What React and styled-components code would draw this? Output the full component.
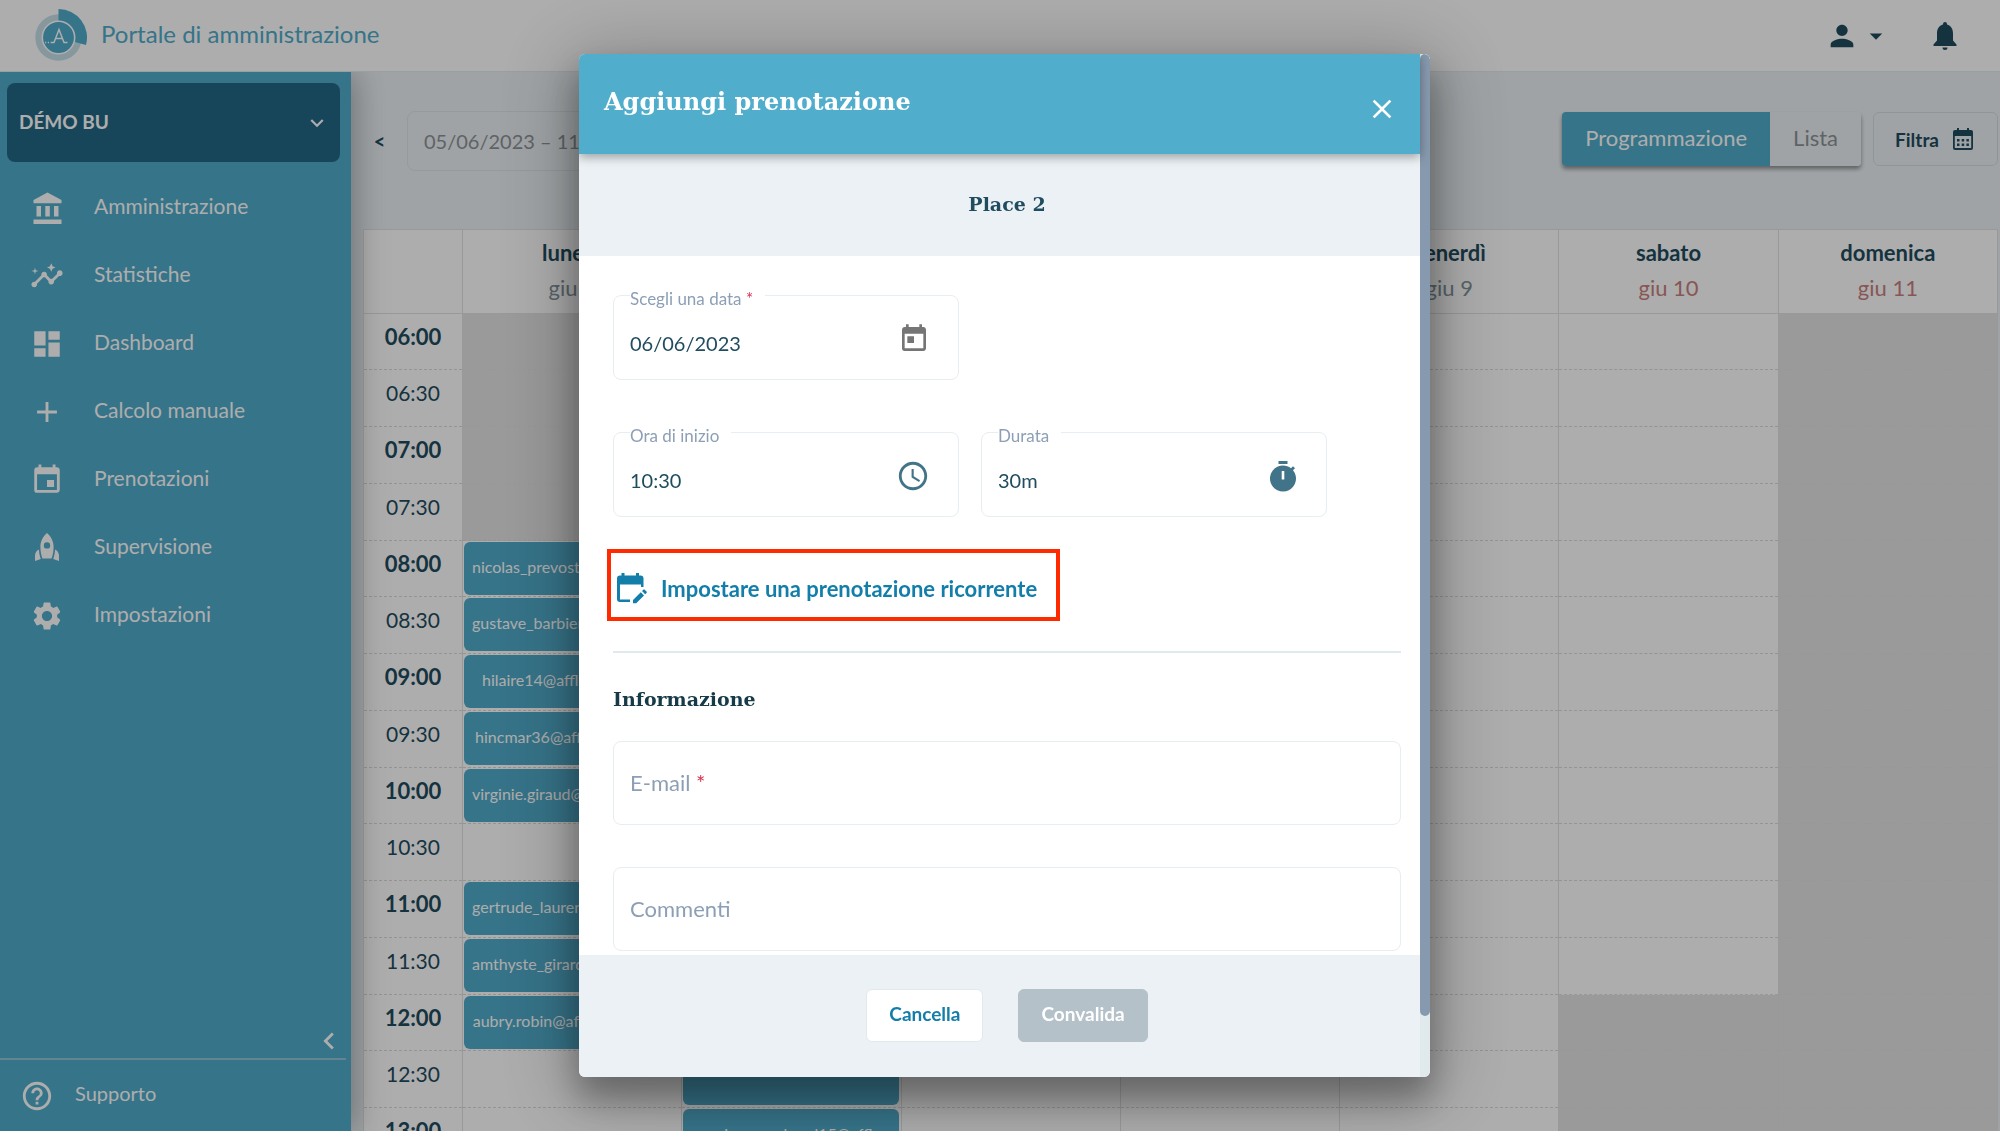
import React from 'react';
import styled, { createGlobalStyle } from 'styled-components';
import {
  MdInsights,
  MdDashboard,
  MdAdd,
  MdEvent,
  MdSettings,
  MdHelpOutline,
  MdKeyboardArrowDown,
  MdKeyboardArrowLeft,
  MdPerson,
  MdArrowDropDown,
  MdClose,
  MdToday,
  MdAccessTime,
} from 'react-icons/md';

const sans = `Lato, "Noto Sans", "Open Sans", sans-serif`;
const slab = `"DejaVu Serif", "Liberation Serif", serif`;

const GlobalStyle = createGlobalStyle`
  * {
    box-sizing: border-box;
  }
  html,
  body {
    margin: 0;
    height: 100%;
    overflow: hidden;
  }
  body {
    font-family: ${sans};
    font-size: 22px;
    color: #1f4c5e;
    background: #ebf1f4;
  }
  button,
  input {
    font: inherit;
    color: inherit;
    margin: 0;
  }
`;

const Page = styled.div`
  display: flex;
  flex-direction: column;
  height: 100vh;
  overflow: hidden;
`;

const TopBar = styled.header`
  position: relative;
  z-index: 2;
  display: flex;
  align-items: center;
  flex-shrink: 0;
  height: 72px;
  padding: 0 43px 0 34px;
  background: #fff;
  border-bottom: 1px solid #e4eaed;
`;

const Brand = styled.h1`
  flex: 1;
  margin: 0 0 0 13px;
  font-size: 24px;
  font-weight: 400;
  line-height: 32px;
  padding-bottom: 4px;
  color: #50abca;
`;

const PlainButton = styled.button`
  display: flex;
  align-items: center;
  padding: 0;
  border: 0;
  background: none;
  cursor: pointer;
`;

const AccountButton = styled(PlainButton)`
  gap: 2px;
  margin-right: 42px;
`;

const Body = styled.div`
  display: flex;
  flex: 1;
  min-height: 0;
`;

const Sidebar = styled.aside`
  display: flex;
  flex-direction: column;
  flex-shrink: 0;
  width: 351px;
  padding-top: 11px;
  color: #fff;
  background: #50abca;
  box-shadow: 2px 0 32px rgba(0, 0, 0, 0.35);
  z-index: 1;
`;

const SiteButton = styled.button`
  display: flex;
  align-items: center;
  justify-content: space-between;
  height: 79px;
  margin: 0 11px 0 7px;
  padding: 0 10px 0 12px;
  border: 0;
  border-radius: 8px;
  font-size: 19px;
  font-weight: 700;
  color: #fff;
  background: #236886;
`;

const SiteName = styled.span`
  padding-bottom: 3px;
`;

const Menu = styled.nav`
  display: flex;
  flex-direction: column;
  flex: 1;
  padding-top: 12px;
`;

const MenuLink = styled.a`
  display: flex;
  align-items: center;
  gap: 30px;
  height: 68px;
  padding-left: 30px;
  font-size: 21px;
  color: #fff;
  text-decoration: none;

  span {
    padding-bottom: 5px;
  }
`;

const CollapseButton = styled(PlainButton)`
  align-self: flex-end;
  margin-right: 5px;
`;

const SupportLink = styled(MenuLink)`
  gap: 21px;
  height: 73px;
  margin-right: 5px;
  padding-left: 20px;
  border-top: 2px solid #94c4d4;
  font-size: 20px;
`;

const Main = styled.main`
  display: flex;
  flex-direction: column;
  flex: 1;
  min-width: 0;
  padding: 39px 2px 0 12px;
  background: #ebf1f4;
`;

const Toolbar = styled.div`
  display: flex;
  align-items: flex-start;
  flex-shrink: 0;
  height: 118px;
`;

const PrevButton = styled(PlainButton)`
  justify-content: center;
  width: 33px;
  height: 60px;
  font-size: 20px;
  font-weight: 700;
`;

const RangeInput = styled.input`
  width: 320px;
  height: 60px;
  margin-left: 11px;
  padding: 0 16px;
  border: 1px solid #dce3e6;
  border-radius: 8px;
  font-size: 20px;
  color: #8d9396;
  background: transparent;
`;

const ViewSwitch = styled.div`
  display: flex;
  margin: 1px 12px 0 auto;
  border-radius: 4px;
  box-shadow: 0 3px 4px rgba(0, 0, 0, 0.4);
`;

const ViewButton = styled.button`
  height: 54px;
  padding: 0 23px 3px;
  border: 0;
  border-radius: ${({ $active }) => ($active ? '4px 0 0 4px' : '0 4px 4px 0')};
  color: ${({ $active }) => ($active ? '#fff' : '#8d9396')};
  background: ${({ $active }) => ($active ? '#50abca' : '#ebf1f4')};
`;

const FilterButton = styled(PlainButton)`
  gap: 14px;
  height: 54px;
  margin-top: 1px;
  padding: 0 24px 0 21px;
  border: 1px solid #d5dde0;
  border-radius: 6px;
  font-size: 19px;
  font-weight: 700;
`;

const Schedule = styled.table`
  width: 100%;
  table-layout: fixed;
  border-collapse: collapse;
  background: #fff;
`;

const Corner = styled.td`
  width: 99px;
  height: 84px;
  border: 1px solid #e2e2e2;
`;

const DayHead = styled.th`
  height: 84px;
  padding: 0 0 4px;
  border: 1px solid #e2e2e2;
  line-height: 35px;
`;

const DayDate = styled.div`
  font-weight: 400;
  color: ${({ $weekend }) => ($weekend ? '#c97f80' : '#83939b')};
`;

const SlotRow = styled.tr`
  height: 57px;

  &:nth-child(4n + 1) {
    height: 56px;
  }
`;

const TimeHead = styled.th`
  padding: 0 0 11px;
  border: solid #e2e2e2;
  border-width: 0 1px;
  border-top: 1px dashed #dadada;
  font-size: ${({ $hour }) => ($hour ? 22 : 21)}px;
  font-weight: ${({ $hour }) => ($hour ? 700 : 400)};
`;

const Slot = styled.td`
  padding: 1px;
  border: solid #e2e2e2;
  border-width: 0 1px;
  border-top: 1px dashed ${({ $closed }) => ($closed ? '#e1e1e1' : '#dadada')};
  vertical-align: top;
  background: ${({ $closed }) => ($closed ? '#e4e4e4' : '#fff')};
`;

const Booking = styled.div`
  height: 53px;
  margin-right: 1px;
  padding: 0 8px;
  border-radius: 6px;
  overflow: hidden;
  text-overflow: ellipsis;
  white-space: nowrap;
  text-align: center;
  font-size: 16px;
  line-height: 50px;
  color: #fff;
  background: #50abca;
`;

const Backdrop = styled.div`
  position: fixed;
  inset: 0;
  z-index: 10;
  display: flex;
  justify-content: center;
  padding: 54px 0;
  background: rgba(0, 0, 0, 0.32);
`;

const Modal = styled.section`
  display: flex;
  width: 851px;
  max-width: 100%;
  margin-left: 9px;
  border-radius: 6px;
  overflow: hidden;
  background: #fff;
  box-shadow: 0 20px 34px 2px rgba(0, 0, 0, 0.3), 0 10px 76px 14px rgba(0, 0, 0, 0.22);
`;

const ModalMain = styled.div`
  display: flex;
  flex-direction: column;
  flex: 1;
`;

const ScrollTrack = styled.div`
  width: 10px;
  background: #e0eaed;
`;

const ScrollThumb = styled.div`
  height: 94%;
  border-radius: 5px;
  background: #8799ae;
`;

const ModalHeader = styled.div`
  display: flex;
  justify-content: space-between;
  flex-shrink: 0;
  height: 100px;
  padding: 31px 22px 0 25px;
  color: #fff;
  background: #50adcb;
  box-shadow: 0 3px 10px rgba(0, 0, 0, 0.35);
  z-index: 1;
`;

const ModalTitle = styled.h2`
  margin: 0;
  font-family: ${slab};
  font-size: 24px;
  line-height: 34px;
`;

const CloseButton = styled(PlainButton)`
  height: 48px;
`;

const Resource = styled.h3`
  flex-shrink: 0;
  height: 102px;
  margin: 0;
  padding: 0 19px 0 34px;
  font-family: ${slab};
  font-size: 19px;
  line-height: 100px;
  text-align: center;
  background: #ebf1f4;
`;

const Form = styled.form`
  display: flex;
  flex-direction: column;
  flex: 1;
  padding: 26px 19px 0 34px;
`;

const FieldRow = styled.div`
  display: grid;
  grid-template-columns: 346px 346px;
  gap: 22px;
  margin-bottom: ${({ $last }) => ($last ? '32px' : '39px')};
`;

const Field = styled.fieldset`
  display: flex;
  align-items: center;
  height: 98px;
  min-width: 0;
  margin: 0;
  padding: 0 28px 1px 16px;
  border: 1px solid #e6eef1;
  border-radius: 8px;

  svg {
    margin-bottom: 8px;
  }
`;

const Legend = styled.legend`
  padding: 7px 12px 0 0;
  font-size: 17px;
  line-height: 19px;
  color: #8c9fb5;
`;

const Required = styled.span`
  color: #dc3350;
`;

const FieldInput = styled.input`
  flex: 1;
  min-width: 0;
  padding: 0;
  border: 0;
  outline: 0;
  font-size: 20px;
  background: transparent;
`;

const RecurringButton = styled.button`
  display: flex;
  align-items: center;
  align-self: flex-start;
  gap: 14px;
  height: 72px;
  margin-left: -6px;
  padding: 6px 19px 0 6px;
  border: 4px solid #ff2a00;
  font-size: 22px;
  font-weight: 700;
  color: #127ea9;
  background: #fff;
`;

const Divider = styled.hr`
  width: 100%;
  height: 2px;
  margin: 30px 0 31px;
  border: 0;
  background: #e0eaed;
`;

const SectionTitle = styled.h3`
  margin: 0 0 27px;
  font-family: ${slab};
  font-size: 19px;
  line-height: 30px;
  color: #163a47;
`;

const WideField = styled.label`
  display: flex;
  align-items: center;
  gap: 5px;
  height: 84px;
  padding: 0 16px 2px;
  border: 1px solid #e6eef1;
  border-radius: 8px;
  color: #8c9fb5;

  & + & {
    margin-top: 42px;
  }
`;

const ModalFooter = styled.div`
  display: flex;
  justify-content: center;
  gap: 35px;
  flex-shrink: 0;
  height: 122px;
  padding: 34px 19px 0 34px;
  background: #ebf1f4;
`;

const FooterButton = styled.button`
  height: 53px;
  padding: 0 22px 4px;
  border: 1px solid ${({ $primary }) => ($primary ? '#b4c1c9' : '#e0eaed')};
  border-radius: 6px;
  font-size: 19px;
  font-weight: 700;
  color: ${({ $primary }) => ($primary ? '#fff' : '#127ea9')};
  background: ${({ $primary }) => ($primary ? '#b4c1c9' : '#fff')};
`;

const Logo = () => (
  <svg width="54" height="71" viewBox="0 0 54 71" aria-hidden="true">
    <circle cx="24.5" cy="37.5" r="23.2" fill="#c6dfe8" />
    <path d="M24.500 9A28.500 28.500 0 0 1 52 45L24.500 37.500Z" fill="#50abca" />
    <circle cx="24.5" cy="37.5" r="16.2" fill="#50abca" stroke="#fff" strokeWidth="1.6" />
    <path
      d="M11 42.500h1.200m1.600 0H15m1.600 0h3.400L25 29.500l5 13h3.500M22 38.500h6"
      fill="none"
      stroke="#fff"
      strokeWidth="1.500"
    />
  </svg>
);

const Bank = () => (
  <svg width="34" height="34" viewBox="0 0 34 34" fill="currentColor" aria-hidden="true">
    <path d="M17.500 1.500 31.500 9v3.200h-28V9ZM6.500 15h4.500v10.500H6.500ZM15.300 15h4.500v10.500h-4.500ZM24 15h4.500v10.500H24ZM3.500 28.500h28V33h-28Z" />
  </svg>
);

const Rocket = () => (
  <svg width="34" height="34" viewBox="0 0 34 34" fill="currentColor" aria-hidden="true">
    <path
      fillRule="evenodd"
      d="M17 2c4.500 3.700 6.600 8.700 6.600 14 0 4-.7 8-2 11.500h-9.200c-1.300-3.500-2-7.500-2-11.500C10.400 10.700 12.500 5.700 17 2Zm0 9.200a3.200 3.200 0 1 0 0 6.400 3.200 3.200 0 0 0 0-6.400Z"
    />
    <path d="M8.900 18.500c.2 3.500.9 6.500 1.900 9.500L5 30v-5.500c0-2.600 1.500-4.800 3.900-6ZM25.100 18.500c-.2 3.500-.9 6.500-1.900 9.500l5.800 2v-5.500c0-2.600-1.500-4.800-3.900-6Z" />
  </svg>
);

const Bell = () => (
  <svg width="24" height="30" viewBox="0 0 24 30" fill="currentColor" aria-hidden="true">
    <path d="M12 1a2 2 0 0 1 2 2v.6c3.900 1 6 4.400 6 8.900v7l3.500 4V25H.5v-1.500l3.500-4v-7c0-4.500 2.100-7.900 6-8.900V3a2 2 0 0 1 2-2ZM9.500 26.500h5a2.500 2.500 0 0 1-5 0Z" />
  </svg>
);

const CalendarGrid = () => (
  <svg width="20" height="24" viewBox="0 0 20 24" fill="currentColor" aria-hidden="true">
    <path
      fillRule="evenodd"
      d="M4 1h2v2h8V1h2v2h2a2 2 0 0 1 2 2v16a2 2 0 0 1-2 2H2a2 2 0 0 1-2-2V5a2 2 0 0 1 2-2h2ZM1.800 9v12h16.400V9ZM4 12h2.500v2.500H4Zm4.700 0h2.500v2.500H8.700Zm4.700 0h2.500v2.500h-2.500ZM4 16.500h2.500V19H4Zm4.700 0h2.500V19H8.700Zm4.700 0h2.500V19h-2.500Z"
    />
  </svg>
);

const CalendarPen = () => (
  <svg width="30" height="32" viewBox="0 0 30 32" fill="currentColor" aria-hidden="true">
    <path
      fillRule="evenodd"
      d="M4.500 1h3v2.500h11.500V1h3v2.500h1.500A3 3 0 0 1 26.500 6.500V15h-2.500v-2.500H3V27.500h10V30H3a3 3 0 0 1-3-3V6.500a3 3 0 0 1 3-3h1.500Z"
    />
    <path d="M16 28l7.800-7.800 3.200 3.200-7.800 7.800H16ZM25 19l1.300-1.300a1 1 0 0 1 1.400 0l1.800 1.800a1 1 0 0 1 0 1.400L28.200 22.200Z" />
  </svg>
);

const Stopwatch = () => (
  <svg width="30" height="32" viewBox="0 0 30 32" fill="#427489" aria-hidden="true">
    <path
      fillRule="evenodd"
      d="M10.500 1h9v3h-9ZM15 5.500c3 0 5.800 1 8 2.700l2-2 2 2-2 2A13 13 0 1 1 15 5.500ZM13.700 11v8.500h2.600V11Z"
    />
  </svg>
);

const menuItems = [
  { label: 'Amministrazione', icon: <Bank /> },
  { label: 'Statistiche', icon: <MdInsights size={34} /> },
  { label: 'Dashboard', icon: <MdDashboard size={34} /> },
  { label: 'Calcolo manuale', icon: <MdAdd size={34} /> },
  { label: 'Prenotazioni', icon: <MdEvent size={34} /> },
  { label: 'Supervisione', icon: <Rocket /> },
  { label: 'Impostazioni', icon: <MdSettings size={34} /> },
];

const days = [
  { name: 'lunedì', date: 'giu 5' },
  { name: 'martedì', date: 'giu 6' },
  { name: 'mercoledì', date: 'giu 7' },
  { name: 'giovedì', date: 'giu 8' },
  { name: 'venerdì', date: 'giu 9' },
  { name: 'sabato', date: 'giu 10', weekend: true },
  { name: 'domenica', date: 'giu 11', weekend: true },
];

const times = [
  '06:00', '06:30', '07:00', '07:30', '08:00', '08:30', '09:00', '09:30',
  '10:00', '10:30', '11:00', '11:30', '12:00', '12:30', '13:00',
];

const bookings = {
  0: {
    '08:00': 'nicolas_prevost@affluences.com',
    '08:30': 'gustave_barbier@affluences.com',
    '09:00': 'hilaire14@affluences.com',
    '09:30': 'hincmar36@affluences.com',
    '10:00': 'virginie.giraud@affluences.com',
    '11:00': 'gertrude_laurent@affluences.com',
    '11:30': 'amthyste_girard@affluences.com',
    '12:00': 'aubry.robin@affluences.com',
  },
  1: {
    '12:30': '',
    '13:00': 'marine.marchand15@affl…',
  },
};

const isClosed = (day, time) =>
  (day === 0 && time < '08:00') || (day === 5 && time >= '12:00') || day === 6;

const App = () => {
  return (
    <Page>
      <GlobalStyle />
      <TopBar>
        <Logo />
        <Brand>Portale di amministrazione</Brand>
        <AccountButton aria-label="Account">
          <MdPerson size={34} />
          <MdArrowDropDown size={30} />
        </AccountButton>
        <PlainButton aria-label="Notifiche">
          <Bell />
        </PlainButton>
      </TopBar>

      <Body>
        <Sidebar>
          <SiteButton>
            <SiteName>DÉMO BU</SiteName>
            <MdKeyboardArrowDown size={26} />
          </SiteButton>
          <Menu>
            {menuItems.map((item) => (
              <MenuLink href="#" key={item.label}>
                {item.icon}
                <span>{item.label}</span>
              </MenuLink>
            ))}
          </Menu>
          <CollapseButton aria-label="Riduci">
            <MdKeyboardArrowLeft size={34} color="#fff" />
          </CollapseButton>
          <SupportLink href="#">
            <MdHelpOutline size={34} />
            <span>Supporto</span>
          </SupportLink>
        </Sidebar>

        <Main>
          <Toolbar>
            <PrevButton aria-label="Settimana precedente">&lt;</PrevButton>
            <RangeInput aria-label="Periodo" defaultValue="05/06/2023 – 11/06/2023" />
            <ViewSwitch>
              <ViewButton $active>Programmazione</ViewButton>
              <ViewButton>Lista</ViewButton>
            </ViewSwitch>
            <FilterButton>
              Filtra
              <CalendarGrid />
            </FilterButton>
          </Toolbar>

          <Schedule>
            <thead>
              <tr>
                <Corner />
                {days.map((day) => (
                  <DayHead key={day.name} scope="col">
                    {day.name}
                    <DayDate $weekend={day.weekend}>{day.date}</DayDate>
                  </DayHead>
                ))}
              </tr>
            </thead>
            <tbody>
              {times.map((time) => (
                <SlotRow key={time}>
                  <TimeHead scope="row" $hour={time.endsWith('00')}>{time}</TimeHead>
                  {days.map((day, i) => (
                    <Slot key={day.name} $closed={isClosed(i, time)}>
                      {bookings[i]?.[time] !== undefined && (
                        <Booking>{bookings[i][time]}</Booking>
                      )}
                    </Slot>
                  ))}
                </SlotRow>
              ))}
            </tbody>
          </Schedule>
        </Main>
      </Body>

      <Backdrop>
        <Modal role="dialog" aria-labelledby="modal-title">
          <ModalMain>
            <ModalHeader>
              <ModalTitle id="modal-title">Aggiungi prenotazione</ModalTitle>
              <CloseButton aria-label="Chiudi">
                <MdClose size={32} color="#fff" />
              </CloseButton>
            </ModalHeader>
            <Resource>Place 2</Resource>
            <Form>
              <FieldRow>
                <Field>
                  <Legend>
                    <label htmlFor="date">Scegli una data <Required>*</Required></label>
                  </Legend>
                  <FieldInput id="date" defaultValue="06/06/2023" />
                  <MdToday size={32} color="#757575" />
                </Field>
              </FieldRow>
              <FieldRow $last>
                <Field>
                  <Legend><label htmlFor="start">Ora di inizio</label></Legend>
                  <FieldInput id="start" defaultValue="10:30" />
                  <MdAccessTime size={34} color="#427489" />
                </Field>
                <Field>
                  <Legend><label htmlFor="duration">Durata</label></Legend>
                  <FieldInput id="duration" defaultValue="30m" />
                  <Stopwatch />
                </Field>
              </FieldRow>
              <RecurringButton type="button">
                <CalendarPen />
                Impostare una prenotazione ricorrente
              </RecurringButton>
              <Divider />
              <SectionTitle>Informazione</SectionTitle>
              <WideField>
                <span>E-mail <Required>*</Required></span>
                <FieldInput type="email" />
              </WideField>
              <WideField>
                <span>Commenti</span>
                <FieldInput />
              </WideField>
            </Form>
            <ModalFooter>
              <FooterButton>Cancella</FooterButton>
              <FooterButton $primary disabled>Convalida</FooterButton>
            </ModalFooter>
          </ModalMain>
          <ScrollTrack>
            <ScrollThumb />
          </ScrollTrack>
        </Modal>
      </Backdrop>
    </Page>
  );
};

export default App;
